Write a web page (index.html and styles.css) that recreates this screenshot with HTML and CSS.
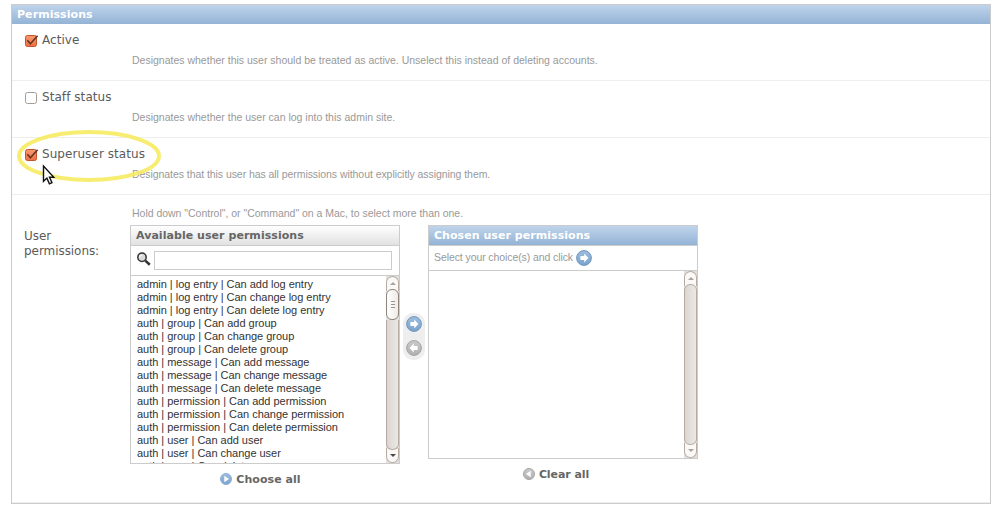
FILE: index.html
```html
<!DOCTYPE html>
<html lang="en">
<head>
<meta charset="utf-8">
<title>Permissions</title>
<link rel="stylesheet" href="styles.css">
</head>
<body>
<svg class="defs" width="0" height="0">
  <defs>
    <linearGradient id="blue" x1="0" y1="0" x2="0" y2="1"><stop offset="0" stop-color="#9dbddd"/><stop offset="1" stop-color="#7ba3cd"/></linearGradient>
    <linearGradient id="gray" x1="0" y1="0" x2="0" y2="1"><stop offset="0" stop-color="#cbcbcb"/><stop offset="1" stop-color="#b0b0b0"/></linearGradient>
    <linearGradient id="orange" x1="0" y1="0" x2="0" y2="1"><stop offset="0" stop-color="#fb9a72"/><stop offset="1" stop-color="#ee6f42"/></linearGradient>
    <symbol id="arrow" viewBox="0 0 16 16"><path d="M4.4 6.1h3.8V3.6L12.4 8l-4.2 4.4V9.9H4.4z" fill="#fff"/></symbol>
    <symbol id="checked" viewBox="0 0 15 14">
      <rect x="1.5" y="1.5" width="11" height="11" rx="2" fill="url(#orange)" stroke="#c2532b"/>
      <path d="M3.3 6.3l3.1 3.4L13.6 1.8" fill="none" stroke="#6b3524" stroke-width="1.7"/>
    </symbol>
  </defs>
</svg>
<fieldset class="module">
  <h2 class="module-title">Permissions</h2>
  <div class="row">
    <label class="check"><svg class="box" width="15" height="14"><use href="#checked"/></svg><span>Active</span></label>
    <p class="help">Designates whether this user should be treated as active. Unselect this instead of deleting accounts.</p>
  </div>
  <div class="row">
    <label class="check"><svg class="box" width="15" height="14"><rect x="1.5" y="1.5" width="11" height="11" rx="2" fill="#fff" stroke="#a79c94"/></svg><span>Staff status</span></label>
    <p class="help">Designates whether the user can log into this admin site.</p>
  </div>
  <div class="row">
    <label class="check"><svg class="box" width="15" height="14"><use href="#checked"/></svg><span>Superuser status</span></label>
    <p class="help tight">Designates that this user has all permissions without explicitly assigning them.</p>
  </div>
  <div class="row-last">
    <div class="field-label">User permissions:</div>
    <div class="field">
      <p class="help hold">Hold down "Control", or "Command" on a Mac, to select more than one.</p>
      <div class="selector">
        <div class="column">
          <div class="panel">
            <h2 class="panel-title">Available user permissions</h2>
            <div class="search">
              <svg width="16" height="16" viewBox="0 0 16 16"><circle cx="6" cy="6.3" r="4.2" fill="#dcdcdc" stroke="#333" stroke-width="1.5"/><path d="M3.7 6.3a2.3 2.3 0 0 1 2.3-2.3" stroke="#fff" fill="none"/><path d="M9.3 9.6l4.5 4.2" stroke="#333" stroke-width="2.6"/></svg>
              <input class="search-input" type="text">
            </div>
            <div class="list list-available">
              <ul class="options">
                <li>admin | log entry | Can add log entry</li>
                <li>admin | log entry | Can change log entry</li>
                <li>admin | log entry | Can delete log entry</li>
                <li>auth | group | Can add group</li>
                <li>auth | group | Can change group</li>
                <li>auth | group | Can delete group</li>
                <li>auth | message | Can add message</li>
                <li>auth | message | Can change message</li>
                <li>auth | message | Can delete message</li>
                <li>auth | permission | Can add permission</li>
                <li>auth | permission | Can change permission</li>
                <li>auth | permission | Can delete permission</li>
                <li>auth | user | Can add user</li>
                <li>auth | user | Can change user</li>
                <li>auth | user | Can delete user</li>
              </ul>
              <div class="scrollbar">
                <div class="cap cap-up"><svg width="6" height="3"><path d="M0 3L3 0l3 3z" fill="#aaa39e"/></svg></div>
                <div class="thumb"><i></i><i></i><i></i></div>
                <div class="trough"></div>
                <div class="cap cap-down"><svg width="6" height="3"><path d="M0 0h6L3 3z" fill="#4c4744"/></svg></div>
              </div>
            </div>
          </div>
          <a class="all choose"><svg width="12" height="12" viewBox="0 0 12 12"><circle cx="6" cy="6" r="5.5" fill="url(#blue)" stroke="#8fb0d3"/><path d="M4.3 2.8v6.4L9 6z" fill="#fff"/></svg>Choose all</a>
        </div>
        <div class="chooser">
          <svg width="16" height="16" viewBox="0 0 16 16"><circle cx="8" cy="8" r="7.4" fill="url(#blue)" stroke="#7096bd"/><use href="#arrow" width="16" height="16"/></svg>
          <svg width="16" height="16" viewBox="0 0 16 16"><circle cx="8" cy="8" r="7.4" fill="url(#gray)" stroke="#a3a3a3"/><use href="#arrow" width="16" height="16" transform="rotate(180 8 8)"/></svg>
        </div>
        <div class="column">
          <div class="panel">
            <h2 class="panel-title chosen-title">Chosen user permissions</h2>
            <div class="hint"><span>Select your choice(s) and click</span><svg width="16" height="16" viewBox="0 0 16 16"><circle cx="8" cy="8" r="7.4" fill="url(#blue)" stroke="#7096bd"/><use href="#arrow" width="16" height="16"/></svg></div>
            <div class="list list-chosen">
              <ul class="options"></ul>
              <div class="scrollbar">
                <div class="cap cap-up"><svg width="6" height="3"><path d="M0 3L3 0l3 3z" fill="#aaa39e"/></svg></div>
                <div class="trough full"></div>
                <div class="cap cap-down"><svg width="6" height="3"><path d="M0 0h6L3 3z" fill="#aaa39e"/></svg></div>
              </div>
            </div>
          </div>
          <a class="all clear"><svg width="12" height="12" viewBox="0 0 12 12"><circle cx="6" cy="6" r="5.5" fill="url(#gray)" stroke="#a3a3a3"/><path d="M7.7 2.8v6.4L3 6z" fill="#fff"/></svg>Clear all</a>
        </div>
      </div>
    </div>
  </div>
</fieldset>
<svg class="highlight" width="146" height="56" viewBox="0 0 146 56"><ellipse cx="73" cy="28" rx="70" ry="24" fill="none" stroke="#f6ea5c" stroke-opacity=".88" stroke-width="4"/></svg>
<svg class="cursor" width="14" height="22" viewBox="0 0 14 22"><path d="M1.5 2v15.3l3.4-3.2 2.5 5.8 2.6-1.2-2.5-5.4h4.3z" fill="#fff" stroke="#111" stroke-width="1.4"/></svg>
</body>
</html>
```
FILE: styles.css
```css
* { box-sizing: border-box; }
body { margin: 0; padding: 4px 9px 0 11px; background: #fff; font-family: "DejaVu Sans", sans-serif; color: #5b5b5b; }
h2, p, ul { margin: 0; padding: 0; }
ul { list-style: none; }
svg { display: block; flex: none; }
.defs { position: absolute; }
.module { margin: 0; padding: 0; min-width: 0; height: 500px; border: 1px solid #ccc; display: flex; flex-direction: column; }
.module-title { height: 19px; padding-left: 5px; font-size: 11px; line-height: 19px; letter-spacing: .06px; color: #fff; background: linear-gradient(#bfd4eb, #94b3d5); }
.row { height: 57px; padding: 9px 0 0 12px; border-bottom: 1px solid #eee; }
.check { display: flex; gap: 3px; height: 16px; font-size: 12px; line-height: 15px; letter-spacing: .06px; }
.box { margin-top: 1px; }
.help { font: 10.5px/14px "Liberation Sans", Arial, sans-serif; color: #999; white-space: nowrap; }
.row .help { margin: 4px 0 0 108px; }
.help.tight { letter-spacing: -.06px; }
.row-last { display: flex; flex: 1; padding-left: 12px; border-bottom: 1px solid #eee; }
.field-label { width: 106px; padding: 34px 20px 0 0; font-size: 12px; line-height: 15px; letter-spacing: -.06px; }
.field { padding-top: 11px; }
.hold { margin-left: 2px; letter-spacing: -.02px; }
.selector { display: flex; margin-top: 5px; }
.column { width: 270px; }
.panel { border: 1px solid #ccc; }
.panel-title { height: 20px; padding-left: 5px; font-size: 11px; line-height: 19px; letter-spacing: .05px; color: #666; border-bottom: 1px solid #ccc; background: linear-gradient(#fff, #e1e1e1); }
.chosen-title { color: #fff; background: linear-gradient(#bfd4eb, #94b3d5); }
.search { display: flex; height: 30px; padding: 5px 7px 0 5px; gap: 2px; border-bottom: 1px solid #ccc; }
.search-input { flex: 1; height: 19px; min-width: 0; border: 1px solid #ccc; background: #fff; }
.hint { display: flex; align-items: center; gap: 3px; height: 25px; padding-left: 5px; border-bottom: 1px solid #ccc; font: 10.5px/14px "Liberation Sans", Arial, sans-serif; letter-spacing: -.09px; color: #999; }
.hint span { padding-bottom: 2px; }
.list { display: flex; overflow: hidden; height: 187px; }
.options { flex: 1; padding: 2px 0 0 6px; font: 11px/13px "Liberation Sans", Arial, sans-serif; letter-spacing: -.025px; color: #333; }
.scrollbar { display: flex; flex-direction: column; width: 13px; height: 187px; background: #e3dfdc; }
.cap { display: flex; justify-content: center; height: 15px; flex: none; border: 1px solid #b5aba3; background: #faf9f7; }
.cap-up { border-radius: 7px 7px 0 0; border-bottom: 0; padding-top: 5px; }
.cap-down { border-radius: 0 0 7px 7px; border-top: 0; padding-top: 6px; }
.thumb { display: flex; flex-direction: column; align-items: center; justify-content: center; gap: 2px; height: 31px; margin-top: -2px; flex: none; border: 1px solid #8e857e; border-radius: 6px; background: linear-gradient(90deg, #fff, #eeebe8); }
.thumb i { width: 4px; height: 1px; background: #9a928c; }
.trough { z-index: 1; flex: 1; border: 1px solid #b5aba3; border-width: 0 1px 1px; border-radius: 0 0 6px 6px; background: linear-gradient(90deg, #dcd6d1, #ebe8e5); margin-bottom: -2px; }
.full { border-top-width: 1px; border-radius: 6px; margin-top: -2px; }
.all { display: flex; justify-content: center; align-items: center; gap: 4px; height: 14px; margin-top: 8px; font-size: 11px; font-weight: bold; color: #666; }
.choose { margin-left: -9px; letter-spacing: .06px; }
.clear { margin-left: -14px; letter-spacing: -.08px; }
.chooser { display: flex; flex-direction: column; align-items: center; gap: 8px; width: 22px; height: 47px; margin: 88px 3px 0; padding-top: 3px; border-radius: 10px; background: #eee; }
.highlight { position: absolute; left: 16px; top: 128px; }
.cursor { position: absolute; left: 42px; top: 164px; }
```
